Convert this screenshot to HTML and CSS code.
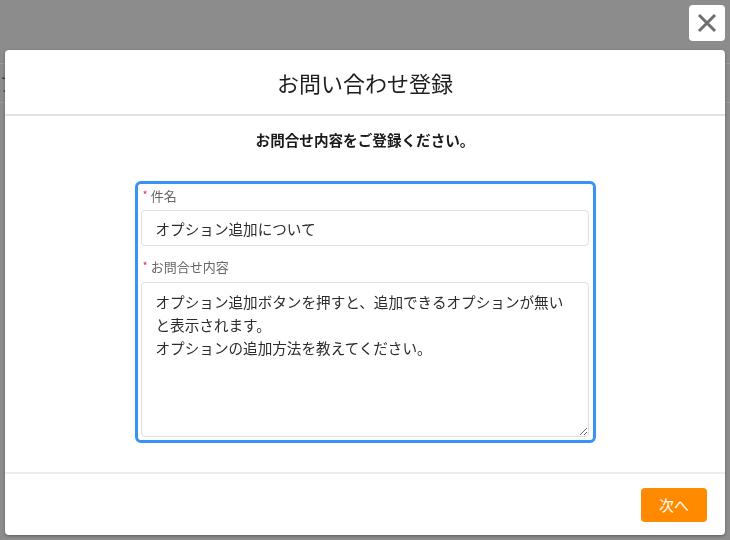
FILE: index.html
```html
<!DOCTYPE html>
<html lang="ja">

<head>
    <meta charset="UTF-8">
    <meta name="viewport" content="width=device-width, initial-scale=1.0">
    <title>お問い合わせ登録</title>
    <link rel="stylesheet" href="styles.css">
</head>

<body>
    <div class="page">
        <div class="page-header"><span class="page-title">ア</span></div>
    </div>

    <div class="overlay">
        <button class="close" type="button">
            <svg width="20" height="20" viewBox="0 0 20 20">
                <path d="M2 2L18 18M18 2L2 18" stroke="#6e6e6e" stroke-width="3" fill="none" />
            </svg>
        </button>
        <div class="modal">
            <div class="modal-header">お問い合わせ登録</div>
            <div class="modal-body">
                <p class="lead">お問合せ内容をご登録ください。</p>
                <div class="form-box">
                    <label class="label"><span class="req">*</span>件名</label>
                    <input class="input" type="text" value="オプション追加について">
                    <label class="label label2"><span class="req">*</span>お問合せ内容</label>
                    <textarea class="textarea">オプション追加ボタンを押すと、追加できるオプションが無いと表示されます。
オプションの追加方法を教えてください。</textarea>
                </div>
            </div>
            <div class="modal-footer">
                <button class="next" type="button">次へ</button>
            </div>
        </div>
    </div>
</body>

</html>
```

FILE: styles.css
```css
* {
    margin: 0;
    padding: 0;
    box-sizing: border-box;
}

body {
    background-color: #8c8c8c;
    font-family: "Noto Sans CJK JP", "Noto Sans", sans-serif;
    color: #222;
}

.page-header {
    margin-top: 63px;
    height: 40px;
    border-top: 1px solid #9b9b9b;
    border-bottom: 1px solid #9b9b9b;
    display: flex;
    align-items: center;
}

.page-title {
    font-size: 18px;
    color: #3a3a3a;
}

.overlay {
    position: fixed;
    left: 0;
    top: 0;
    right: 0;
    bottom: 0;
}

.close {
    position: absolute;
    top: 5px;
    right: 5px;
    width: 36px;
    height: 36px;
    border: none;
    border-radius: 4px;
    background-color: #fff;
    display: flex;
    align-items: center;
    justify-content: center;
}

.modal {
    width: 720px;
    height: 485px;
    margin: 50px 0 0 5px;
    background-color: #fff;
    border-radius: 4px;
    box-shadow: 0 1px 3px rgba(0, 0, 0, 0.35);
    display: flex;
    flex-direction: column;
}

.modal-header {
    height: 66px;
    border-bottom: 2px solid #e2e2e2;
    display: flex;
    align-items: center;
    justify-content: center;
    font-size: 22px;
    color: #1e1e1e;
}

.modal-body {
    flex: 1;
    padding-top: 14px;
}

.lead {
    text-align: center;
    font-size: 14.6px;
    line-height: 20px;
    font-weight: bold;
    color: #1a1a1a;
}

.form-box {
    width: 461px;
    height: 262px;
    margin: 31px auto 0;
    border: 3px solid #3894f2;
    border-radius: 6px;
    padding: 2px 4px 3px 3px;
    display: flex;
    flex-direction: column;
}

.label {
    font-size: 13px;
    line-height: 20px;
    color: #666;
    display: flex;
    align-items: flex-start;
}

.req {
    color: #e8334a;
    font-size: 11px;
    line-height: 16px;
    margin: 0 3px 0 2px;
}

.label2 {
    margin-top: 11px;
}

.input,
.textarea {
    width: 100%;
    border: 1px solid #e1e1e1;
    border-radius: 4px;
    font-family: "Noto Sans CJK JP", "Noto Sans", sans-serif;
    font-size: 14.6px;
    color: #2b2b2b;
    outline: none;
}

.input {
    height: 36px;
    margin-top: 4px;
    padding: 0 14px;
}

.textarea {
    height: 155px;
    margin-top: 5px;
    padding: 7px 10px 7px 14px;
    line-height: 23px;
    resize: vertical;
    overflow: hidden;
}

.modal-footer {
    height: 63px;
    border-top: 2px solid #ececec;
    display: flex;
    align-items: center;
    justify-content: flex-end;
    padding-right: 18px;
}

.next {
    width: 66px;
    height: 34px;
    border: none;
    border-radius: 4px;
    background-color: #ff8a00;
    color: #fff;
    font-family: "Noto Sans CJK JP", "Noto Sans", sans-serif;
    font-size: 15px;
}
```
